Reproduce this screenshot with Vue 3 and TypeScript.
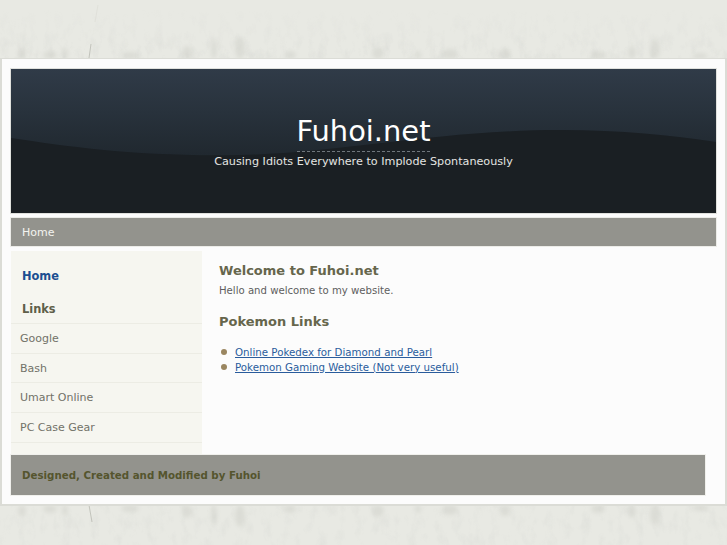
<script setup lang="ts">
const sideLinks = ["Google", "Bash", "Umart Online", "PC Case Gear"];
const pokemonLinks = ["Online Pokedex for Diamond and Pearl", "Pokemon Gaming Website (Not very useful)"];
// smudges on the wall: x, height, half width
const smudges = [
  [22, 12, 4], [50, 8, 7], [65, 11, 3], [130, 7, 9], [187, 13, 5], [214, 20, 3], [240, 22, 5], [290, 8, 6],
  [378, 12, 6], [418, 8, 3], [450, 10, 8], [505, 11, 5], [598, 8, 7], [632, 13, 4], [655, 20, 5], [700, 6, 8],
];
</script>

<template>
  <div class="page">
    <!-- wall texture behind the box -->
    <svg class="grunge" width="727" height="545" viewBox="0 0 727 545" aria-hidden="true">
      <defs>
        <filter id="noise" x="0" y="0" width="100%" height="100%">
          <feTurbulence type="fractalNoise" baseFrequency="0.11 0.06" numOctaves="5" seed="23" />
          <feColorMatrix type="matrix" values="0 0 0 0 0.66  0 0 0 0 0.67  0 0 0 0 0.64  1.3 0 0 0 -0.62" />
        </filter>
        <filter id="soft" x="-60%" y="-60%" width="220%" height="220%">
          <feGaussianBlur stdDeviation="2.2" />
        </filter>
        <linearGradient id="fade" x1="0" y1="0" x2="0" y2="1">
          <stop offset="0" stop-color="#fff" stop-opacity="0" />
          <stop offset="1" stop-color="#fff" stop-opacity="0.85" />
        </linearGradient>
        <mask id="topMask"><rect x="0" y="10" width="727" height="49" fill="url(#fade)" /></mask>
      </defs>
      <rect x="0" y="10" width="727" height="49" filter="url(#noise)" mask="url(#topMask)" />
      <rect x="0" y="505" width="727" height="40" filter="url(#noise)" opacity="0.55" />
      <g filter="url(#soft)" fill="#c9cac3" opacity="0.42">
        <ellipse v-for="s in smudges" :key="'t' + s[0]" :cx="s[0]" :cy="59 - s[1] / 2" :rx="s[2]" :ry="s[1] / 2" />
        <ellipse v-for="s in smudges" :key="'b' + s[0]" :cx="s[0]" :cy="505 + s[1] / 2" :rx="s[2]" :ry="s[1] / 2" />
      </g>
      <path d="M98 5 L95 22" stroke="#dcddd6" stroke-width="0.7" fill="none" />
      <path d="M91 44 L89 58 M89 505 L92 522" stroke="#bdbeb7" stroke-width="0.9" fill="none" />
    </svg>

    <div class="box">
      <header class="banner">
        <svg class="swoosh" width="705" height="144" viewBox="0 0 705 144" preserveAspectRatio="none" aria-hidden="true">
          <path d="M0 69 C60 78 130 88 230 86 C330 84 430 61 550 61 C610 61 660 66 705 73 V144 H0 Z" fill="#1a1f23" />
        </svg>
        <div class="banner-text">
          <h1 class="site-title">Fuhoi.net</h1>
          <p class="tagline">Causing Idiots Everywhere to Implode Spontaneously</p>
        </div>
      </header>

      <nav class="topnav"><a class="topnav-link">Home</a></nav>

      <div class="columns">
        <aside class="sidebar">
          <a class="side-home">Home</a>
          <h3 class="side-title">Links</h3>
          <ul class="side-list">
            <li v-for="item in sideLinks" :key="item">{{ item }}</li>
          </ul>
        </aside>
        <main class="content">
          <h2 class="welcome">Welcome to Fuhoi.net</h2>
          <p class="intro">Hello and welcome to my website.</p>
          <h2 class="subhead">Pokemon Links</h2>
          <ul class="poke-list">
            <li v-for="item in pokemonLinks" :key="item"><a>{{ item }}</a></li>
          </ul>
        </main>
      </div>

      <footer class="foot">Designed, Created and Modified by Fuhoi</footer>
    </div>
  </div>
</template>

<style>
html,
body {
  margin: 0;
  background: #e7e8e2;
}
</style>

<style scoped>
.page {
  position: relative;
  width: 727px;
  height: 545px;
  overflow: hidden;
  padding-top: 58px;
  box-sizing: border-box;
  background: #e8e9e3;
  font-family: "DejaVu Sans", sans-serif;
}
.grunge {
  position: absolute;
  left: 0;
  top: 0;
}
.box {
  position: relative;
  width: 727px;
  height: 448px;
  box-sizing: border-box;
  padding: 10px 0 0 9px;
  background: #fcfcfc;
  border: solid #dbdcd6;
  border-width: 1px 2px 2px;
}
.banner {
  position: relative;
  width: 705px;
  height: 144px;
  background: linear-gradient(#303b48 0%, #28323c 30%, #20282f 60%, #1c2329 100%);
  outline: 1px solid #e0e1dd;
  display: flex;
  justify-content: center;
}
.swoosh {
  position: absolute;
  left: 0;
  top: 0;
}
.banner-text {
  position: relative;
  padding-top: 44px;
  text-align: center;
}
.site-title {
  display: table;
  margin: 0 auto;
  padding-bottom: 2px;
  font-size: 28.9px;
  line-height: 36px;
  font-weight: 400;
  color: #fff;
  border-bottom: 1px dashed #6f767c;
}
.tagline {
  margin: 1px 0 0;
  font-size: 11.2px;
  line-height: 18px;
  color: #e4e5e2;
}
.topnav {
  margin-top: 5px;
  width: 705px;
  height: 28px;
  background: #93938d;
  outline: 1px solid #ecece8;
  display: flex;
  align-items: center;
  padding-left: 11px;
  box-sizing: border-box;
}
.topnav-link {
  font-size: 11px;
  color: #f4f4f0;
}
.columns {
  display: flex;
  margin-top: 5px;
  height: 204px;
}
.sidebar {
  width: 191px;
  background: #f6f6f0;
  padding-top: 18px;
  box-sizing: border-box;
}
.side-home {
  display: block;
  padding-left: 11px;
  font-size: 11.4px;
  line-height: 15px;
  font-weight: 700;
  color: #1c4f91;
}
.side-title {
  margin: 18px 0 0;
  padding: 0 0 6px 11px;
  font-size: 11.4px;
  line-height: 15px;
  font-weight: 700;
  color: #5f5f4a;
  border-bottom: 1px solid #ecece4;
}
.side-list {
  list-style: none;
  margin: 0;
  padding: 0;
}
.side-list li {
  height: 29.7px;
  box-sizing: border-box;
  line-height: 29px;
  padding-left: 9px;
  font-size: 11px;
  color: #727268;
  border-bottom: 1px solid #ecece4;
}
.content {
  flex: 1;
  padding: 12px 0 0 17px;
}
.welcome {
  margin: 0;
  font-size: 13px;
  line-height: 16px;
  font-weight: 700;
  color: #66664c;
}
.intro {
  margin: 5px 0 0;
  font-size: 10.15px;
  line-height: 14px;
  color: #5e5e5e;
}
.subhead {
  margin: 16px 0 0;
  font-size: 13px;
  line-height: 16px;
  font-weight: 700;
  color: #66664c;
}
.poke-list {
  list-style: none;
  margin: 15px 0 0;
  padding: 0 0 0 16px;
}
.poke-list li {
  position: relative;
  font-size: 10.25px;
  line-height: 14.5px;
}
.poke-list li::before {
  content: "";
  position: absolute;
  left: -14px;
  top: 4px;
  width: 6px;
  height: 6px;
  border-radius: 50%;
  background: #9a8660;
}
.poke-list a {
  color: #2a5c9c;
  text-decoration: underline;
}
.foot {
  width: 694px;
  height: 40px;
  background: #93938d;
  outline: 1px solid #f0f0ec;
  display: flex;
  align-items: center;
  padding-left: 11px;
  box-sizing: border-box;
  font-size: 10.25px;
  font-weight: 700;
  color: #55552e;
}
</style>
